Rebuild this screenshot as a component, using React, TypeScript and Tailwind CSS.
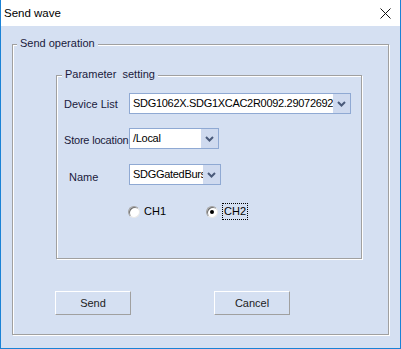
import React from "react";

const font = { fontFamily: '"Liberation Sans", Arial, sans-serif' };

function Chevron() {
  return (
    <svg width="9" height="6" viewBox="0 0 9 6">
      <path d="M1 1 L4.5 4.5 L8 1" fill="none" stroke="#4a5a7a" strokeWidth="2" />
    </svg>
  );
}

function Combo({ value, width }: { value: string; width: string }) {
  return (
    <div className={`flex h-[21px] shrink-0 border border-[#8fa9d3] bg-white ${width}`}>
      <div className="flex flex-1 items-center overflow-hidden whitespace-nowrap pl-[3px] text-[11px] leading-[13px] tracking-[-0.3px] text-black">
        {value}
      </div>
      <div className="flex w-[17px] shrink-0 items-center justify-center bg-[#cfdaef]">
        <Chevron />
      </div>
    </div>
  );
}

function Radio({ checked }: { checked?: boolean }) {
  return (
    <div className="flex h-[12px] w-[12px] shrink-0 items-center justify-center rounded-full border border-[#a0a0a0] border-b-[#e8e8e8] border-r-[#e8e8e8] bg-white shadow-[inset_1px_1px_0_#707070]">
      {checked && <div className="h-[4px] w-[4px] rounded-full bg-black" />}
    </div>
  );
}

function Btn({ label }: { label: string }) {
  return (
    <div className="flex h-[24px] w-[76px] items-center justify-center border border-white border-b-[#a0a0a0] border-r-[#a0a0a0] text-[11px] leading-[13px] text-[#222]">
      {label}
    </div>
  );
}

export default function App() {
  return (
    <div
      className="flex h-[349px] w-[401px] flex-col border-x border-b border-[#1a82d6]"
      style={font}
    >
      {/* Title bar */}
      <div className="flex h-[26px] items-center justify-between bg-white pl-[3px] pr-[9px]">
        <span className="text-[11.5px] leading-[14px] text-black">Send wave</span>
        <svg width="11" height="11" viewBox="0 0 11 11">
          <path d="M0.5 0.5 L10.5 10.5 M10.5 0.5 L0.5 10.5" stroke="#111" strokeWidth="1" />
        </svg>
      </div>

      {/* Body */}
      <div className="flex-1 bg-[#d5e0f2] pl-[11px] pt-[18px]">
        <div className="relative h-[291px] w-[377px] border border-[#a0a0a0] pl-[43px] pt-[30px] shadow-[1px_1px_0_#fff,inset_1px_1px_0_#fff]">
          <span className="absolute left-[4px] top-[-8px] bg-[#d5e0f2] px-[3px] text-[11px] leading-[13px] text-[#1a1a3c]">
            Send operation
          </span>

          <div className="relative h-[184px] w-[306px] border border-[#a0a0a0] pl-[7px] pt-[17px] shadow-[1px_1px_0_#fff,inset_1px_1px_0_#fff]">
            <span className="absolute left-[5px] top-[-8px] whitespace-pre bg-[#d5e0f2] px-[3px] text-[11px] leading-[13px] text-[#1a1a3c]">
              {"Parameter  setting"}
            </span>

            <div className="flex flex-col text-[11px] leading-[13px] text-[#1a1a3c]">
              <div className="flex items-start">
                <span className="mt-[5px] w-[65px] shrink-0 whitespace-nowrap">Device List</span>
                <Combo value="SDG1062X.SDG1XCAC2R0092.290726928" width="w-[222px]" />
              </div>
              <div className="mt-[14px] flex items-start">
                <span className="mt-[6px] w-[65px] shrink-0 whitespace-nowrap tracking-[-0.2px]">Store location</span>
                <Combo value="/Local" width="w-[90px]" />
              </div>
              <div className="mt-[15px] flex items-start">
                <span className="mt-[7px] w-[65px] shrink-0 whitespace-nowrap pl-[5px]">Name</span>
                <Combo value="SDGGatedBurst" width="w-[92px]" />
              </div>
              <div className="mt-[18px] flex items-center pl-[64px] text-black">
                <div className="flex w-[78px] items-center gap-[4px]">
                  <Radio />
                  <span>CH1</span>
                </div>
                <div className="flex items-center gap-[4px]">
                  <Radio checked />
                  <span className="border border-dotted border-black px-[1px] py-[1px]">CH2</span>
                </div>
              </div>
            </div>
          </div>

          <div className="ml-[-1px] mt-[32px] flex gap-[83px]">
            <Btn label="Send" />
            <Btn label="Cancel" />
          </div>
        </div>
      </div>
    </div>
  );
}
